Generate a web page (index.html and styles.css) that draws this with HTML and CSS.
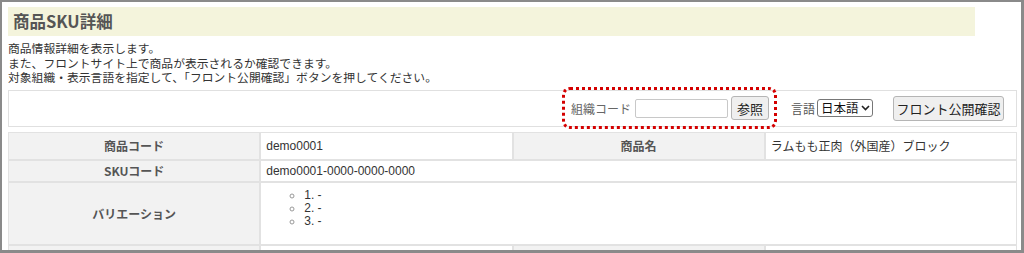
FILE: index.html
```html
<!DOCTYPE html>
<html lang="ja">
<head>
    <meta charset="UTF-8">
    <meta name="viewport" content="width=device-width, initial-scale=1.0">
    <title>商品SKU詳細</title>
    <link rel="stylesheet" href="styles.css">
</head>
<body>
    <div class="frame">
        <h1 class="page-title">商品SKU詳細</h1>

        <div class="description">
            <p>商品情報詳細を表示します。</p>
            <p>また、フロントサイト上で商品が表示されるか確認できます。</p>
            <p>対象組織・表示言語を指定して、「フロント公開確認」ボタンを押してください。</p>
        </div>

        <div class="search-panel">
            <div class="org-group">
                <label class="field-label">組織コード</label>
                <input type="text" class="org-input">
                <button class="btn btn-small">参照</button>
                <span class="highlight"></span>
            </div>
            <div class="lang-group">
                <label class="field-label">言語</label>
                <span class="select-box"><span>日本語</span><svg width="9" height="8" viewBox="0 0 9 8"><path d="M1 2 L4.5 5.5 L8 2" fill="none" stroke="#222" stroke-width="1.6"/></svg></span>
            </div>
            <button class="btn btn-front">フロント公開確認</button>
        </div>

        <table class="detail-table">
            <colgroup>
                <col class="col-quarter">
                <col class="col-quarter">
                <col class="col-quarter">
                <col class="col-quarter">
            </colgroup>
            <tr class="row-main">
                <th>商品コード</th>
                <td>demo0001</td>
                <th>商品名</th>
                <td>ラムもも正肉（外国産）ブロック</td>
            </tr>
            <tr class="row-sku">
                <th>SKUコード</th>
                <td colspan="3">demo0001-0000-0000-0000</td>
            </tr>
            <tr class="row-variation">
                <th>バリエーション</th>
                <td colspan="3" class="variation-cell">
                    <ul>
                        <li>1. -</li>
                        <li>2. -</li>
                        <li>3. -</li>
                    </ul>
                </td>
            </tr>
            <tr class="row-next">
                <th></th>
                <td></td>
                <th></th>
                <td></td>
            </tr>
        </table>
    </div>
</body>
</html>
```

FILE: styles.css
```css
html, body {
    margin: 0;
    padding: 0;
    background-color: #fff;
}
body {
    font-family: "Liberation Sans", "Noto Sans CJK JP", sans-serif;
    color: #333;
}
.frame {
    box-sizing: border-box;
    width: 1024px;
    height: 253px;
    overflow: hidden;
    border-left: 2px solid #8a8a8a;
    border-top: 2px solid #8a8a8a;
    border-right: 3px solid #8a8a8a;
    border-bottom: 3px solid #8a8a8a;
    padding: 5px 4px 0 6px;
}
.page-title {
    width: 967px;
    height: 29px;
    margin: 0;
    padding: 0 5px;
    box-sizing: border-box;
    background-color: #f4f4dc;
    color: #555;
    font-family: "Noto Sans CJK JP", sans-serif;
    font-size: 16.5px;
    font-weight: bold;
    line-height: 29px;
}
.description {
    margin-top: 5px;
    font-family: "Noto Sans CJK JP", sans-serif;
    font-size: 11.8px;
    line-height: 14.5px;
    color: #333;
}
.description p {
    margin: 0;
    white-space: nowrap;
}
.search-panel {
    position: relative;
    margin-top: 5px;
    height: 37px;
    box-sizing: border-box;
    border: 1px solid #e0e0e0;
    display: flex;
    align-items: center;
    justify-content: flex-end;
    padding-right: 12px;
    font-family: "Noto Sans CJK JP", sans-serif;
}
.org-group {
    position: relative;
    display: flex;
    align-items: center;
}
.field-label {
    font-size: 12px;
    color: #666;
    margin-right: 4px;
    white-space: nowrap;
}
.org-input {
    width: 93px;
    height: 19px;
    box-sizing: border-box;
    border: 1px solid #c8c8c8;
    border-radius: 2px;
    margin: 0 3px 0 0;
    padding: 0 3px;
}
.btn {
    box-sizing: border-box;
    font-family: "Noto Sans CJK JP", sans-serif;
    font-size: 13px;
    color: #222;
    background-color: #efefef;
    border: 1px solid #b5b5b5;
    border-radius: 3px;
    padding: 0;
    cursor: pointer;
    white-space: nowrap;
}
.btn-small {
    width: 38px;
    height: 24px;
}
.btn-front {
    width: 111px;
    height: 25px;
    margin-left: 20px;
}
.highlight {
    position: absolute;
    left: -9px;
    right: -8px;
    top: -9px;
    bottom: -9px;
    border: 3px dotted #d40000;
    border-radius: 8px;
    pointer-events: none;
}
.lang-group {
    display: flex;
    align-items: center;
    margin-left: 22px;
}
.lang-group .field-label {
    color: #555;
    margin-right: 2px;
}
.select-box {
    display: inline-flex;
    align-items: center;
    justify-content: space-between;
    flex-shrink: 0;
    width: 56px;
    box-sizing: border-box;
    height: 18px;
    padding: 0 2px 0 3px;
    border: 1px solid #777;
    border-radius: 3px;
    font-size: 12.5px;
    color: #111;
    line-height: 16px;
    white-space: nowrap;
}
.detail-table {
    width: 100%;
    margin-top: 5px;
    table-layout: fixed;
    border-collapse: separate;
    border-spacing: 0;
    font-size: 12px;
}
.col-quarter {
    width: 25%;
}
.detail-table th,
.detail-table td {
    border: 1px solid #e2e2e2;
    padding: 0 5px;
    vertical-align: middle;
    text-align: left;
}
.detail-table th {
    background-color: #f2f2f2;
    text-align: center;
    font-family: "Noto Sans CJK JP", sans-serif;
    font-weight: bold;
    color: #555;
}
.detail-table td {
    color: #333;
}
.row-main th, .row-main td {
    height: 26px;
}
.row-main td:last-child {
    font-family: "Noto Sans CJK JP", sans-serif;
}
.row-sku th, .row-sku td {
    height: 20px;
}
.row-variation th, .row-variation td {
    height: 61px;
}
.variation-cell {
    vertical-align: top !important;
}
.variation-cell ul {
    margin: 6px 0 0;
    padding-left: 38px;
    list-style-type: circle;
    line-height: 13px;
}
.variation-cell li::marker {
    color: #999;
}
.row-next th, .row-next td {
    height: 30px;
}
```
